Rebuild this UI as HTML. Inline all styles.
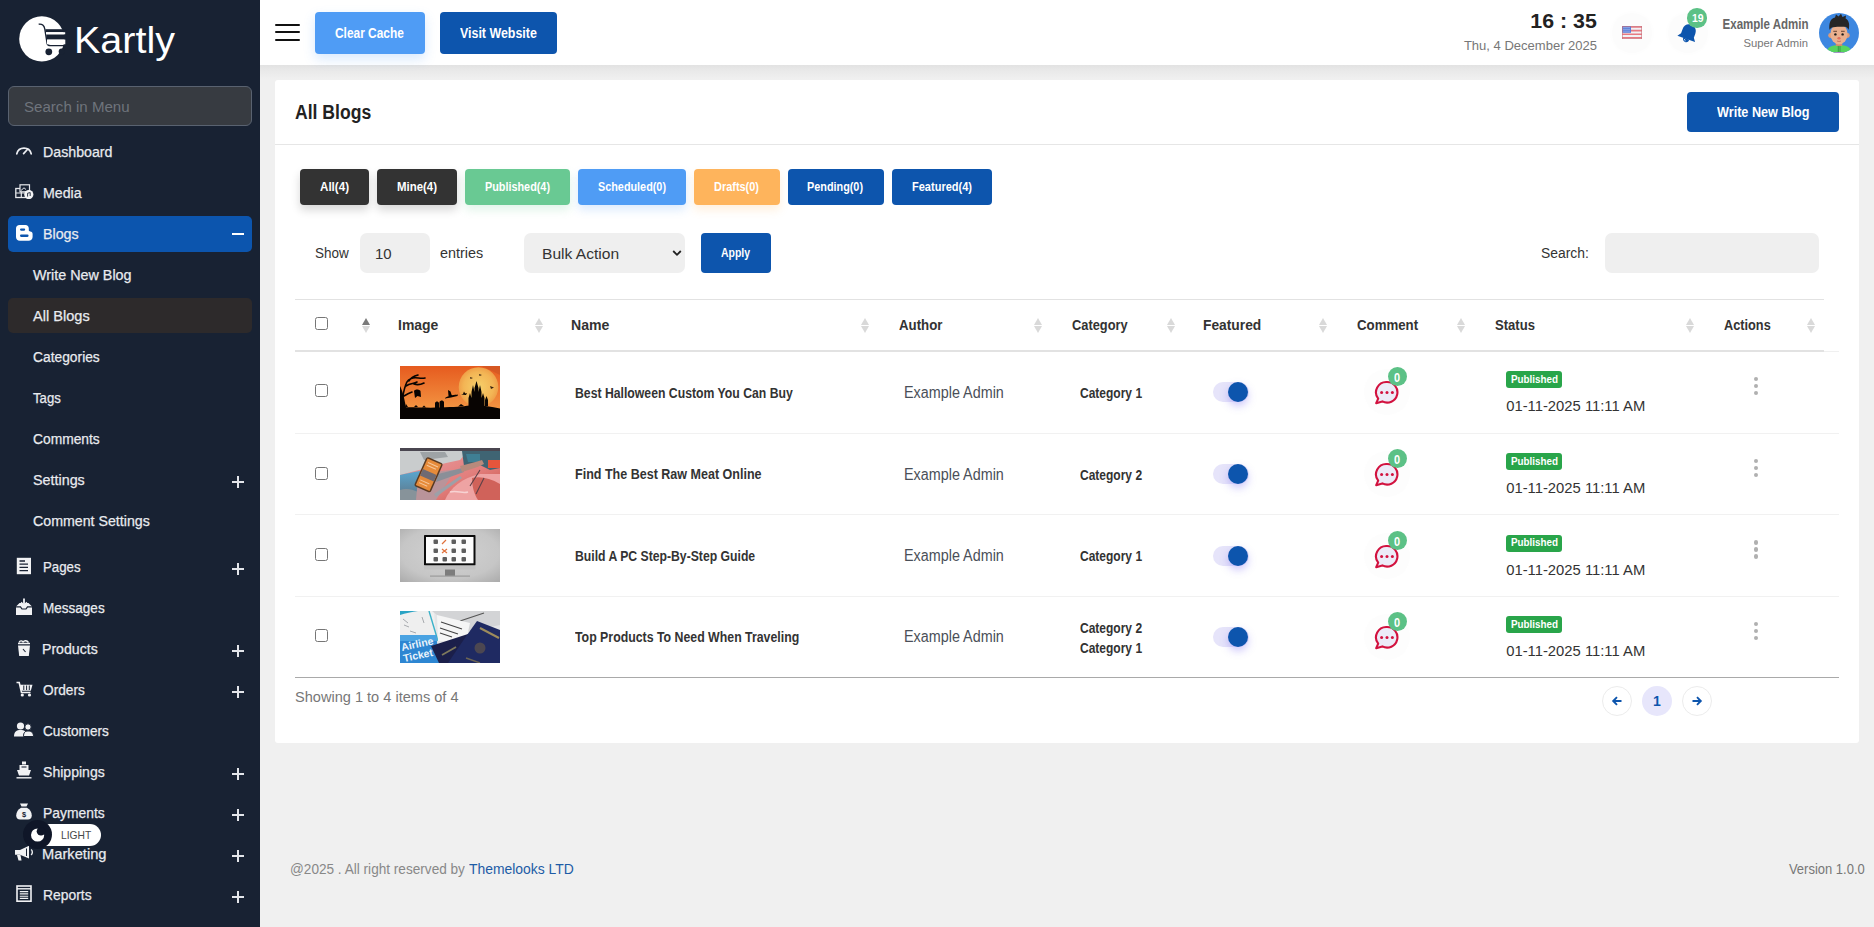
<!DOCTYPE html>
<html><head><meta charset="utf-8"><title>All Blogs</title>
<style>
*{box-sizing:border-box;margin:0;padding:0}
html,body{width:1874px;height:927px;overflow:hidden;background:#f0f0f0;font-family:"Liberation Sans",sans-serif;position:relative}
.a{position:absolute}
.tx{position:absolute;white-space:nowrap;line-height:1;z-index:3}
#sb{position:absolute;left:0;top:0;width:260px;height:927px;background:#182233}
.pl{position:absolute;width:12px;height:12px}
.pl:before{content:"";position:absolute;left:0;top:5px;width:12px;height:2px;background:#e3e5ea}
.pl:after{content:"";position:absolute;left:5px;top:0;width:2px;height:12px;background:#e3e5ea}
.btn{position:absolute;border-radius:4px}
.cb{position:absolute;width:13px;height:13px;border:1px solid #767676;border-radius:2.5px;background:#fff}
.sort{position:absolute;width:8px;height:16px}
.sort:before{content:"";position:absolute;left:0;top:0;border-left:4px solid transparent;border-right:4px solid transparent;border-bottom:7px solid #d9d9d9}
.sort:after{content:"";position:absolute;left:0;top:8px;border-left:4px solid transparent;border-right:4px solid transparent;border-top:7px solid #d9d9d9}
.sort.up:before{border-bottom-color:#7a7a7a}
.tog{position:absolute;width:36px;height:20px;border-radius:10px;background:#e6e4fa}
.knob{position:absolute;width:20px;height:20px;border-radius:50%;background:#0d55ad;box-shadow:0 4px 8px rgba(110,90,240,.35)}
.pub{position:absolute;width:56px;height:17px;border-radius:3px;background:#29a54a}
.dot{position:absolute;width:4.6px;height:4.6px;border-radius:50%;background:#b0b0b0}
.badge{position:absolute;width:19px;height:19px;border-radius:50%;background:#5cc186}
.pg{position:absolute;width:30px;height:30px;border-radius:50%;border:1px solid #ececec;background:#fff}

</style></head><body>
<div id="sb">
  <svg class="a" style="left:15px;top:12px" width="55" height="55" viewBox="15 12 55 55">
    <circle cx="41.8" cy="38.9" r="22.6" fill="#fff"/>
    <path d="M38.7 24.2 C42 23.6 44.2 25.5 44.8 29 L47.2 43.8 C47.6 45.3 48.6 45.6 50.5 45.6 L66 45.6" fill="none" stroke="#182233" stroke-width="1.4"/>
    <rect x="45.4" y="29.2" width="21" height="3" fill="#182233"/>
    <rect x="46.3" y="34.3" width="20" height="5.3" fill="#182233"/>
    <rect x="63" y="24" width="6" height="5.2" fill="#182233"/>
    <rect x="64.6" y="32.2" width="5" height="2.1" fill="#182233"/>
    <rect x="64.8" y="39.6" width="5" height="4.7" fill="#182233"/>
    <rect x="46" y="32.2" width="19.2" height="2.1" fill="#fff"/>
    <rect x="47" y="39.6" width="18.3" height="4.7" fill="#fff"/>
    <circle cx="48.8" cy="51.8" r="3.4" fill="#182233"/>
    <circle cx="61.6" cy="51.5" r="2.9" fill="#182233"/>
  </svg>
  <div class="a" style="left:8px;top:86px;width:244px;height:40px;border:1px solid #596270;border-radius:6px;background:#373b41"></div>

  <!-- icons -->
  <svg class="a" style="left:15px;top:142.5px" width="18" height="12" viewBox="0 0 18 12">
    <path d="M1.8 10.8 A7.4 7.4 0 0 1 16.2 10.8" fill="none" stroke="#eceef2" stroke-width="1.7" stroke-linecap="round"/>
    <path d="M8.6 10.6 L12.6 6.2" stroke="#eceef2" stroke-width="1.7" stroke-linecap="round"/>
  </svg>
  <svg class="a" style="left:15px;top:184px" width="19" height="15" viewBox="0 0 19 15">
    <rect x="0.8" y="4.5" width="11" height="9" fill="none" stroke="#e6e8ec" stroke-width="1.3"/>
    <path d="M0.8 9 H11.8 M6.3 4.5 V13.5" stroke="#e6e8ec" stroke-width="1.2"/>
    <rect x="5" y="0.8" width="9.5" height="7" fill="#182233" stroke="#e6e8ec" stroke-width="1.2"/>
    <path d="M6 6.5 L9 3.8 L11 5.5" stroke="#e6e8ec" stroke-width="1" fill="none"/>
    <circle cx="13.8" cy="10.6" r="4.6" fill="#f2f3f5"/>
    <path d="M12.6 12.6 V9.2 L15.2 8.6 V12" stroke="#182233" stroke-width="0.9" fill="none"/>
  </svg>
  <div class="a" style="left:8px;top:216px;width:244px;height:36px;background:#0c55ae;border-radius:5px"></div>
  <svg class="a" style="left:16px;top:225px" width="17" height="16" viewBox="0 0 17 16">
    <path d="M3.5 0 H9.5 C11.5 0 12.8 1.5 12.8 3.5 V5 C12.8 6 13.4 6.4 14.2 6.4 C15.8 6.4 16.6 7.4 16.6 9 V12 C16.6 14.4 14.8 15.8 12.6 15.8 H3.8 C1.6 15.8 0 14.2 0 12 V3.5 C0 1.4 1.4 0 3.5 0 Z" fill="#fff"/>
    <rect x="4" y="3.4" width="5.2" height="2.3" rx="1.1" fill="#0c55ae"/>
    <rect x="4" y="9.6" width="8.6" height="2.3" rx="1.1" fill="#0c55ae"/>
  </svg>
  <div class="a" style="left:231.5px;top:232.5px;width:12px;height:2px;background:#fff"></div>
  <div class="a" style="left:8px;top:298px;width:244px;height:35px;background:#2d2a2b;border-radius:5px"></div>

  <div class="pl" style="left:232px;top:476px"></div>
  <div class="pl" style="left:232px;top:563px"></div>
  <div class="pl" style="left:232px;top:645px"></div>
  <div class="pl" style="left:232px;top:686px"></div>
  <div class="pl" style="left:232px;top:768px"></div>
  <div class="pl" style="left:232px;top:809px"></div>
  <div class="pl" style="left:232px;top:850px"></div>
  <div class="pl" style="left:232px;top:891px"></div>

  <!-- pages -->
  <svg class="a" style="left:16px;top:557px" width="16" height="18" viewBox="0 0 16 18">
    <rect x="0.8" y="0.8" width="14.2" height="16.4" fill="#f1f2f4"/>
    <path d="M3.5 4 H9 M3.5 7.2 H12 M3.5 10.4 H12 M3.5 13.6 H12" stroke="#182233" stroke-width="1.3"/>
  </svg>
  <!-- messages -->
  <svg class="a" style="left:16px;top:598px" width="16" height="18" viewBox="0 0 16 18">
    <path d="M0 8.5 L3.5 5 H5.5 L8 8 L10.5 5 H12.5 L16 8.5 V17 H0 Z" fill="#f1f2f4"/>
    <path d="M0 8.8 H4.5 L6 11 H10 L11.5 8.8 H16" stroke="#182233" stroke-width="1.2" fill="none"/>
    <path d="M8 0.5 V7" stroke="#f1f2f4" stroke-width="1.8"/>
    <path d="M5 4.5 L8 7.6 L11 4.5" stroke="#f1f2f4" stroke-width="1.8" fill="none"/>
  </svg>
  <!-- products -->
  <svg class="a" style="left:17px;top:640px" width="14" height="17" viewBox="0 0 14 17">
    <path d="M1 5.5 H13 L11.8 16 H2.2 Z" fill="#f1f2f4"/>
    <path d="M1 3.5 H13" stroke="#f1f2f4" stroke-width="1.5"/>
    <path d="M2 2.5 C3 0.5 5 0.5 6 2 C7.5 0 10 0.5 11.5 2.5" stroke="#f1f2f4" stroke-width="1.3" fill="none"/>
    <path d="M6 9 L8.5 12" stroke="#182233" stroke-width="1.1"/>
  </svg>
  <!-- orders -->
  <svg class="a" style="left:16px;top:681px" width="17" height="16" viewBox="0 0 17 16">
    <path d="M0.5 1.5 H3.2 L5.5 11.5 H14.5" stroke="#f1f2f4" stroke-width="1.6" fill="none"/>
    <path d="M4 3.8 H16.5 L14.8 9.8 H5.3 Z" fill="#f1f2f4"/>
    <path d="M7.8 4.5 V9 M10.6 4.5 V9 M13.3 4.5 V9" stroke="#182233" stroke-width="1"/>
    <circle cx="6.3" cy="14" r="1.6" fill="#f1f2f4"/><circle cx="13.5" cy="14" r="1.6" fill="#f1f2f4"/>
  </svg>
  <!-- customers -->
  <svg class="a" style="left:14px;top:722px" width="20" height="15" viewBox="0 0 20 15">
    <circle cx="6.5" cy="4" r="3.6" fill="#f1f2f4"/>
    <path d="M0 14.5 C0 9.5 2.5 8 6.5 8 C10.5 8 13 9.5 13 14.5 Z" fill="#f1f2f4"/>
    <circle cx="14" cy="5" r="3.2" fill="#f1f2f4" stroke="#182233" stroke-width="1"/>
    <path d="M9.5 14.5 C9.5 10.5 11 9 14 9 C17.5 9 19.5 10.5 19.5 14.5 Z" fill="#f1f2f4" stroke="#182233" stroke-width="1"/>
  </svg>
  <!-- shippings -->
  <svg class="a" style="left:16px;top:761px" width="16" height="18" viewBox="0 0 16 18">
    <rect x="6" y="0.5" width="4" height="3" fill="#f1f2f4"/>
    <path d="M3.5 4 H12.5 V9 H3.5 Z" fill="#f1f2f4"/>
    <path d="M1 9 H15 L13 14.5 H3 Z" fill="#f1f2f4"/>
    <path d="M5.5 6 H10.5" stroke="#182233" stroke-width="1.1"/>
    <path d="M0.5 16.8 H15.5" stroke="#f1f2f4" stroke-width="1.4"/>
  </svg>
  <!-- payments -->
  <svg class="a" style="left:16px;top:803px" width="16" height="17" viewBox="0 0 16 17">
    <path d="M4 0.5 H12 L10.5 3.5 H5.5 Z" fill="#f1f2f4"/>
    <path d="M5 4.8 H11 C14 6.5 15.8 9.5 15.8 12.5 C15.8 15 14.2 16.5 12 16.5 H4 C1.8 16.5 0.2 15 0.2 12.5 C0.2 9.5 2 6.5 5 4.8 Z" fill="#f1f2f4"/>
    <text x="8" y="14" font-family="Liberation Sans" font-size="7.5" font-weight="bold" text-anchor="middle" fill="#182233">$</text>
  </svg>
  <!-- marketing -->
  <svg class="a" style="left:14px;top:845px" width="20" height="16" viewBox="0 0 20 16">
    <path d="M1 5 H6 L15 0.8 V13.5 L6 9.8 H1 Z" fill="#f1f2f4"/>
    <path d="M3 10 L4.5 15.5 H7.5 L6.5 10" fill="#f1f2f4"/>
    <path d="M12.5 3.5 V11" stroke="#182233" stroke-width="1"/>
    <path d="M17 4.5 C18.8 5.5 18.8 8.8 17 9.8" stroke="#f1f2f4" stroke-width="1.4" fill="none"/>
  </svg>
  <!-- reports -->
  <svg class="a" style="left:16px;top:885px" width="16" height="17" viewBox="0 0 16 17">
    <rect x="1" y="1" width="14" height="15.2" fill="none" stroke="#f1f2f4" stroke-width="1.6"/>
    <path d="M1 3.8 H15" stroke="#f1f2f4" stroke-width="1.4"/>
    <path d="M3.8 6.6 H12.2 M3.8 8.9 H12.2 M3.8 11.2 H12.2 M3.8 13.4 H12.2" stroke="#f1f2f4" stroke-width="1.1"/>
  </svg>

  <!-- light toggle -->
  <div class="a" style="left:24px;top:824px;width:77px;height:22px;border-radius:11px;background:#fff;z-index:5"></div>
  <div class="a" style="left:23px;top:820px;width:29px;height:29px;border-radius:50%;background:#0f1628;z-index:5"></div>
  <svg class="a" style="left:29px;top:826px;z-index:6" width="17" height="17" viewBox="0 0 17 17">
    <circle cx="8.6" cy="9" r="6.6" fill="#fff"/>
    <circle cx="12" cy="5.3" r="4.3" fill="#0f1628"/>
  </svg>
</div>

<!-- header -->
<div class="a" style="left:260px;top:65px;width:1614px;height:14px;background:linear-gradient(#e2e2e2,#e9e9e9 40%,#f0f0f0)"></div>
<div class="a" style="left:260px;top:0;width:1614px;height:65px;background:#fff"></div>
<div class="a" style="left:275px;top:23.5px;width:25px;height:2px;background:#111;border-radius:1px"></div>
<div class="a" style="left:275px;top:31.3px;width:25px;height:2px;background:#111;border-radius:1px"></div>
<div class="a" style="left:275px;top:39.2px;width:25px;height:2px;background:#111;border-radius:1px"></div>
<div class="btn" style="left:315px;top:12px;width:110px;height:42px;background:#4f9cf5;box-shadow:0 5px 12px rgba(79,156,245,.22)"></div>
<div class="btn" style="left:440px;top:12px;width:117px;height:42px;background:#0d55ad"></div>
<div class="a" style="left:1612px;top:13px;width:40px;height:40px;border-radius:50%;background:#fcfcfc;box-shadow:0 0 6px rgba(0,0,0,.015)"></div>
<svg class="a" style="left:1622px;top:26px" width="20" height="13" viewBox="0 0 20 13">
  <rect x="0" y="0" width="20" height="13" fill="#f1f1f4"/>
  <path d="M0 1 H20 M0 4.6 H20 M0 8.2 H20 M0 11.8 H20" stroke="#e77a82" stroke-width="1.6"/>
  <rect x="0" y="0" width="9" height="6.8" fill="#5b7ed8"/>
  <path d="M1.5 1.6 H8 M1.5 3.4 H8 M1.5 5.2 H8" stroke="#dfe6fb" stroke-width="0.7" stroke-dasharray="1 1"/>
  <rect x="0.3" y="0.3" width="19.4" height="12.4" fill="none" stroke="#c9707a" stroke-width="0.6"/>
</svg>
<div class="a" style="left:1668px;top:13px;width:40px;height:40px;border-radius:50%;background:#fcfcfc;box-shadow:0 0 6px rgba(0,0,0,.015)"></div>
<svg class="a" style="left:1674px;top:20px" width="28" height="27" viewBox="0 0 28 27">
  <g transform="rotate(20 14 14)">
    <path d="M14 4.2 C9.8 4.2 7.2 7.3 7.2 11.3 V15.6 L4.6 19.2 H23.4 L20.8 15.6 V11.3 C20.8 7.3 18.2 4.2 14 4.2 Z" fill="#0d55ad"/>
    <path d="M10.8 19 C10.8 21.4 12.2 22.6 14 22.6 C15.8 22.6 17.2 21.4 17.2 19 Z" fill="#0d55ad"/>
    <path d="M12.4 20 C12.8 21 13.4 21.3 14 21.3" stroke="#dfe9f7" stroke-width=".8" fill="none"/>
  </g>
</svg>
<div class="badge" style="left:1687.2px;top:8.2px;width:19.5px;height:19.5px"></div>
<svg class="a" style="left:1819px;top:13px" width="40" height="40" viewBox="0 0 40 40">
  <defs><clipPath id="av"><circle cx="20" cy="20" r="20"/></clipPath></defs>
  <g clip-path="url(#av)">
    <rect width="40" height="40" fill="#3d87e0"/>
    <path d="M7 41 C8 34 12 32 20 32 C28 32 32 34 33 41 Z" fill="#56d45e"/>
    <path d="M10 39 H30 V41 H10 Z" fill="#b48ad8"/>
    <path d="M19.3 32 V39 M21 32 V39" stroke="#2f7d3c" stroke-width="0.7"/>
    <rect x="16.8" y="28" width="6.4" height="5" fill="#cf8d6c"/>
    <circle cx="11.6" cy="22.5" r="2.4" fill="#df9c78"/><circle cx="28.4" cy="22.5" r="2.4" fill="#df9c78"/>
    <ellipse cx="20" cy="21" rx="8.6" ry="10.4" fill="#eab08e"/>
    <path d="M10.5 17 C9.5 10 12 5 16 4.5 L17 1.5 L19.5 3.5 L22 0.8 L23.5 4 L27 2.5 L26.6 5.5 C30 7 31 12 29.5 17 C28.5 14.5 27.5 13.8 24 13.8 C20 13.5 15 13.8 13 14.5 C11.5 15.3 11 16 10.5 17 Z" fill="#262626"/>
    <path d="M14.3 18.3 H18 M22 18.3 H25.7" stroke="#5b3a2a" stroke-width="0.9"/>
    <circle cx="16.4" cy="21.4" r="1.2" fill="#1d1d1d"/><circle cx="23.6" cy="21.4" r="1.2" fill="#1d1d1d"/>
    <ellipse cx="20" cy="25.2" rx="1.6" ry="1.2" fill="#e0705c"/>
    <path d="M18 28 C19 28.6 21 28.6 22 28" stroke="#b4604d" stroke-width="0.7" fill="none"/>
  </g>
</svg>

<!-- card -->
<div class="a" style="left:275px;top:80px;width:1584px;height:663px;background:#fff;border-radius:3px"></div>
<div class="a" style="left:275px;top:144px;width:1584px;height:1px;background:#e6e6e6"></div>
<div class="btn" style="left:1687px;top:92px;width:152px;height:40px;background:#0d55ad"></div>

<div class="btn" style="left:300px;top:169px;width:69px;height:36px;background:#333;box-shadow:0 5px 10px rgba(0,0,0,.16)"></div>
<div class="btn" style="left:377px;top:169px;width:80px;height:36px;background:#333;box-shadow:0 5px 10px rgba(0,0,0,.16)"></div>
<div class="btn" style="left:465px;top:169px;width:105px;height:36px;background:#69c993;box-shadow:0 5px 10px rgba(105,201,147,.2)"></div>
<div class="btn" style="left:578px;top:169px;width:108px;height:36px;background:#4f9cf5;box-shadow:0 5px 10px rgba(79,156,245,.2)"></div>
<div class="btn" style="left:694px;top:169px;width:86px;height:36px;background:#feb45c;box-shadow:0 5px 10px rgba(254,180,92,.2)"></div>
<div class="btn" style="left:788px;top:169px;width:96px;height:36px;background:#0d55ad"></div>
<div class="btn" style="left:892px;top:169px;width:100px;height:36px;background:#0d55ad"></div>

<div class="a" style="left:360px;top:233px;width:70px;height:40px;background:#efefef;border-radius:7px"></div>
<div class="a" style="left:524px;top:233px;width:161px;height:40px;background:#efefef;border-radius:7px"></div>
<svg class="a" style="left:672px;top:249px" width="10" height="8" viewBox="0 0 10 8"><path d="M1.2 2 L5 5.8 L8.8 2" fill="none" stroke="#222" stroke-width="1.8"/></svg>
<div class="btn" style="left:701px;top:233px;width:70px;height:40px;background:#0d55ad"></div>
<div class="a" style="left:1605px;top:233px;width:214px;height:40px;background:#efefef;border-radius:7px"></div>

<!-- table -->
<div class="a" style="left:295px;top:299px;width:1529px;height:1px;background:#e2e2e2"></div>
<div class="a" style="left:295px;top:350px;width:1529px;height:2px;background:#e2e2e2"></div>
<div class="a" style="left:1824px;top:351px;width:15px;height:1px;background:#f0f0f0"></div>
<div class="a" style="left:295px;top:433px;width:1544px;height:1px;background:#f1f1f1"></div>
<div class="a" style="left:295px;top:514px;width:1544px;height:1px;background:#f1f1f1"></div>
<div class="a" style="left:295px;top:596px;width:1544px;height:1px;background:#f1f1f1"></div>
<div class="a" style="left:295px;top:677px;width:1544px;height:1px;background:#a9a9a9"></div>

<div class="cb" style="left:315px;top:317px"></div>
<div class="sort up" style="left:362px;top:318px"></div>
<div class="sort" style="left:535px;top:318px"></div>
<div class="sort" style="left:860.5px;top:318px"></div>
<div class="sort" style="left:1034.3px;top:318px"></div>
<div class="sort" style="left:1166.6px;top:318px"></div>
<div class="sort" style="left:1319.2px;top:318px"></div>
<div class="sort" style="left:1457px;top:318px"></div>
<div class="sort" style="left:1686px;top:318px"></div>
<div class="sort" style="left:1807px;top:318px"></div>
<div class="cb" style="left:315px;top:384px"></div>
<div class="a" style="left:400px;top:366px;width:100px;height:53px;overflow:hidden"><svg width="100" height="53" viewBox="0 0 100 53">
<defs><linearGradient id="hg" x1="0" y1="0" x2="0" y2="1"><stop offset="0" stop-color="#e65b1f"/><stop offset=".75" stop-color="#f2903f"/><stop offset="1" stop-color="#f4a24f"/></linearGradient>
<radialGradient id="mg" cx=".5" cy=".5" r=".5"><stop offset="0" stop-color="#f6d06a"/><stop offset=".75" stop-color="#f3b555"/><stop offset="1" stop-color="#efa048"/></radialGradient></defs>
<rect width="100" height="53" fill="url(#hg)"/>
<circle cx="78.5" cy="21" r="19.8" fill="url(#mg)"/>
<path d="M82 0 C88 3 94 6 100 9 V0 Z" fill="#c95424" opacity=".55"/>
<path d="M0 41.5 C12 41 25 42 40 41.5 C55 41 62 40.5 70 39.5 C80 38.8 90 40.5 100 42.5 V53 H0 Z" fill="#080402"/>
<path d="M1 42 C2 34 3 26 6 18 C7 15 9 13 13 12 C17 11 20 13 25 12 M6 20 C10 17 14 18 17 16 M9 15 C11 11 14 10 18 9 M14 18 C17 19 20 19 24 17 M4 30 C7 28 9 27 12 26" stroke="#080402" stroke-width="1.6" fill="none" stroke-linecap="round"/>
<path d="M0 42 V20 C2 24 4 30 6 42 Z" fill="#080402"/>
<path d="M14 25 C15 23 19 23 20.5 25 L21 31 L17.5 30 L15 32 Z" fill="#080402"/>
<path d="M35 42 V37 C36 35 38 35 39 37 V42 Z M39.5 42 V36 C40.5 34 43 34 44 36 V42 Z" fill="#080402"/>
<path d="M45 32 C49 29 55 29 58 28.5 L57.5 30 C53 31 49 32 45 32.5 Z M48 24 L50.5 25.5 L52 30 L48.5 30 Z" fill="#080402"/>
<path d="M61 28.5 L67 27 L66 29 Z M64 25.5 L65.5 28 L63 28 Z" fill="#080402"/>
<path d="M68.5 40 V32 L70 27 L71.5 32 V26 L73 19 L74.5 26 V22 L76.5 15 L78.5 22 V26 L80 19 L81.5 26 V32 L83 27 L84.5 32 V40 Z" fill="#080402"/>
<path d="M85 40 V34 L86.5 30 L88 34 V40 Z" fill="#080402"/>
<path d="M90 20 L94 21.5 L91 23 Z M70 11 L73 12 L70.5 13 Z M79 8 L82 9 L79.5 10 Z" fill="#3a2410"/>
<path d="M5 41 L6 38 L8 41 M14 41 L16 39 L18 41 M22 41.5 L24 39.5 L26 41.5 M58 40.5 L61 38 L64 40" fill="#080402"/>
</svg></div>
<div class="tog" style="left:1213px;top:382px"></div>
<div class="knob" style="left:1228px;top:382px"></div>
<div class="a" style="left:1364px;top:369px;width:46px;height:46px;border-radius:50%;background:#fdfdfd"></div>
<svg class="a" style="left:1373px;top:380px" width="28" height="26" viewBox="0 0 28 26">
<path d="M14 2 A10.3 10.3 0 1 1 9.3 21.4 L3.2 23.2 L5.2 18.6 A10.3 10.3 0 0 1 14 2 Z" fill="#ecebf8" stroke="#d2123f" stroke-width="2.1" stroke-linejoin="round"/>
<circle cx="8.6" cy="12.6" r="1.5" fill="#d2123f"/><circle cx="14" cy="12.6" r="1.5" fill="#d2123f"/><circle cx="19.4" cy="12.6" r="1.5" fill="#d2123f"/>
</svg>
<div class="badge" style="left:1387.5px;top:367px"></div>
<div class="pub" style="left:1506px;top:371px"></div>
<div class="dot" style="left:1753.5px;top:376.5px"></div>
<div class="dot" style="left:1753.5px;top:383.5px"></div>
<div class="dot" style="left:1753.5px;top:390.5px"></div>
<div class="cb" style="left:315px;top:466.5px"></div>
<div class="a" style="left:400px;top:448px;width:100px;height:53px;overflow:hidden"><svg width="100" height="52" viewBox="0 0 100 52">
<defs>
<linearGradient id="mt" x1="0" y1="0" x2="1" y2="1"><stop offset="0" stop-color="#e9a3a8"/><stop offset=".6" stop-color="#e27f7d"/><stop offset="1" stop-color="#c95247"/></linearGradient>
<linearGradient id="bl" x1="0" y1="0" x2="0" y2="1"><stop offset="0" stop-color="#5aa6cf"/><stop offset="1" stop-color="#5e7383"/></linearGradient>
</defs>
<rect width="100" height="52" fill="url(#mt)"/>
<rect width="100" height="3" fill="#4a4650"/>
<path d="M0 3 H68 L60 12 C40 16 20 22 0 27 Z" fill="#c9cccd"/>
<path d="M20 4 L45 4 L48 9 L24 12 Z" fill="#9ea3a6"/>
<path d="M62 3 H100 V20 L90 22 L78 16 L64 18 Z" fill="#3f6473"/>
<path d="M88 12 H100 V20 H88 Z" fill="#e5553c"/>
<path d="M66 6 H80 V14 H68 Z" fill="#3f7f94"/>
<path d="M0 27 C8 25 14 24 20 23 L18 52 H0 Z" fill="url(#bl)"/>
<path d="M0 42 C6 40 12 41 18 44 L19 52 H0 Z" fill="#87939a"/>
<path d="M18 30 C30 24 45 22 55 22 L36 52 H16 Z" fill="#b9949a"/>
<path d="M38 26 L62 20 L64 24 L36 34 Z" fill="#8a8f98"/>
<path d="M34 46 L60 28 L62 30 L36 49 Z" fill="#9ca0a8"/>
<path d="M60 18 C68 16 76 14 82 12 L84 16 C76 20 68 22 62 24 Z" fill="#b88a7c"/>
<path d="M45 52 C50 40 62 30 80 26 L100 26 V52 Z" fill="#eea3a3"/>
<path d="M72 30 C80 28 90 30 100 36 V52 H78 C74 46 72 38 72 30 Z" fill="#d0625a"/>
<path d="M70 38 L80 22 M76 46 L84 30" stroke="#5b4048" stroke-width="1.1"/>
<path d="M50 44 C58 42 62 46 68 44" stroke="#f7d3d3" stroke-width="1.5" fill="none"/>
<g transform="rotate(24 29 27)"><rect x="19.5" y="11" width="18" height="32" rx="2.5" fill="#5a3a22"/><rect x="21" y="12.5" width="15" height="29" fill="#e68b3a"/><rect x="21" y="24" width="15" height="7" fill="#6f6a72"/><path d="M23 16 H34 M23 19 H33 M23 35 H33 M23 38 H32" stroke="#f6c79a" stroke-width="1"/></g>
</svg></div>
<div class="tog" style="left:1213px;top:464px"></div>
<div class="knob" style="left:1228px;top:464px"></div>
<div class="a" style="left:1364px;top:451px;width:46px;height:46px;border-radius:50%;background:#fdfdfd"></div>
<svg class="a" style="left:1373px;top:462px" width="28" height="26" viewBox="0 0 28 26">
<path d="M14 2 A10.3 10.3 0 1 1 9.3 21.4 L3.2 23.2 L5.2 18.6 A10.3 10.3 0 0 1 14 2 Z" fill="#ecebf8" stroke="#d2123f" stroke-width="2.1" stroke-linejoin="round"/>
<circle cx="8.6" cy="12.6" r="1.5" fill="#d2123f"/><circle cx="14" cy="12.6" r="1.5" fill="#d2123f"/><circle cx="19.4" cy="12.6" r="1.5" fill="#d2123f"/>
</svg>
<div class="badge" style="left:1387.5px;top:449px"></div>
<div class="pub" style="left:1506px;top:453px"></div>
<div class="dot" style="left:1753.5px;top:458.5px"></div>
<div class="dot" style="left:1753.5px;top:465.5px"></div>
<div class="dot" style="left:1753.5px;top:472.5px"></div>
<div class="cb" style="left:315px;top:548px"></div>
<div class="a" style="left:400px;top:529px;width:100px;height:53px;overflow:hidden"><svg width="100" height="53" viewBox="0 0 100 53">
<defs><radialGradient id="pg" cx=".5" cy=".45" r=".75"><stop offset="0" stop-color="#d2d2d2"/><stop offset=".65" stop-color="#c6c6c6"/><stop offset="1" stop-color="#aaaaaa"/></radialGradient></defs>
<rect width="100" height="53" fill="url(#pg)"/>
<rect x="24" y="6" width="51.5" height="30.5" rx="0.8" fill="#0c0c0c"/>
<rect x="26" y="8" width="47.5" height="26.3" fill="#fdfdfd"/>
<g fill="#5e5e5e">
<rect x="33.5" y="10.5" width="4.5" height="4.5" rx="1"/><rect x="51.5" y="10.5" width="4.5" height="4.5" rx="1"/><rect x="61.5" y="10.5" width="4.5" height="4.5" rx="1"/>
<rect x="33.5" y="19.5" width="4.5" height="4.5" rx="1"/><rect x="51.5" y="19.5" width="4.5" height="4.5" rx="1"/><rect x="61.5" y="19.5" width="4.5" height="4.5" rx="1"/>
<rect x="33.5" y="28" width="4.5" height="4.5" rx="1"/><rect x="42.5" y="28" width="4.5" height="4.5" rx="1"/><rect x="51.5" y="28" width="4.5" height="4.5" rx="1"/><rect x="61.5" y="28" width="4.5" height="4.5" rx="1"/>
</g>
<path d="M42 15 L46 11 M42 20 L47 24 M47 20 L42 24" stroke="#e0703a" stroke-width="1.2"/>
<rect x="24" y="36.5" width="51.5" height="4" fill="#c2c2c2"/>
<rect x="45" y="40.5" width="10" height="6.5" fill="#7d7d7d"/>
<rect x="30" y="46.5" width="40" height="1.2" fill="#9c9c9c"/>
</svg></div>
<div class="tog" style="left:1213px;top:545.5px"></div>
<div class="knob" style="left:1228px;top:545.5px"></div>
<div class="a" style="left:1364px;top:532.5px;width:46px;height:46px;border-radius:50%;background:#fdfdfd"></div>
<svg class="a" style="left:1373px;top:543.5px" width="28" height="26" viewBox="0 0 28 26">
<path d="M14 2 A10.3 10.3 0 1 1 9.3 21.4 L3.2 23.2 L5.2 18.6 A10.3 10.3 0 0 1 14 2 Z" fill="#ecebf8" stroke="#d2123f" stroke-width="2.1" stroke-linejoin="round"/>
<circle cx="8.6" cy="12.6" r="1.5" fill="#d2123f"/><circle cx="14" cy="12.6" r="1.5" fill="#d2123f"/><circle cx="19.4" cy="12.6" r="1.5" fill="#d2123f"/>
</svg>
<div class="badge" style="left:1387.5px;top:530.5px"></div>
<div class="pub" style="left:1506px;top:534.5px"></div>
<div class="dot" style="left:1753.5px;top:540.0px"></div>
<div class="dot" style="left:1753.5px;top:547.0px"></div>
<div class="dot" style="left:1753.5px;top:554.0px"></div>
<div class="cb" style="left:315px;top:629px"></div>
<div class="a" style="left:400px;top:611px;width:100px;height:53px;overflow:hidden"><svg width="100" height="52" viewBox="0 0 100 52">
<rect width="100" height="52" fill="#e4e5e7"/>
<path d="M0 0 H34 L36 24 H0 Z" fill="#efefef"/>
<path d="M0 0 H18 C12 1 5 2 0 4 Z" fill="#2aa3c4"/>
<path d="M3 8 L8 12 M4 14 L9 16 M10 20 L16 22 M22 6 L24 12" stroke="#a7aaae" stroke-width="1"/>
<path d="M29 0 L38 30" stroke="#3bb2c9" stroke-width="1.4"/>
<path d="M32 0 H100 V14 L60 22 Z" fill="#d3d4d6"/>
<path d="M60 10 L84 2" stroke="#555" stroke-width="1.3"/>
<path d="M37 4 L70 12 L66 30 L38 30 Z" fill="#f5f5f5"/>
<path d="M41 11 L62 18 M40 17 L58 23 M40 22 L52 26" stroke="#444" stroke-width="1.1"/>
<path d="M0 24 H36 L40 52 H0 Z" fill="#2d86d2"/>
<path d="M0 24 H36 L37 30 H0 Z" fill="#4aa3e2"/>
<text x="2" y="40" font-family="Liberation Sans" font-weight="bold" font-size="10.5" fill="#e9f3fb" transform="rotate(-12 2 40)">Airline</text>
<text x="4" y="51" font-family="Liberation Sans" font-weight="bold" font-size="10.5" fill="#e9f3fb" transform="rotate(-12 4 51)">Ticket</text>
<path d="M31 35 L68 23 L78 52 H39 Z" fill="#1b1f4a"/>
<path d="M48 52 C56 40 64 28 77 10 L100 19 V52 Z" fill="#1f2a62"/>
<path d="M80 17 L99 27" stroke="#9d8c5c" stroke-width="2"/>
<circle cx="80" cy="37" r="5.5" fill="#584f4e" opacity=".8"/>
<path d="M42 44 L56 36" stroke="#7f7a5c" stroke-width="1.8"/>
<path d="M66 47 L80 52" stroke="#6d6654" stroke-width="1.4"/>
</svg></div>
<div class="tog" style="left:1213px;top:627px"></div>
<div class="knob" style="left:1228px;top:627px"></div>
<div class="a" style="left:1364px;top:614px;width:46px;height:46px;border-radius:50%;background:#fdfdfd"></div>
<svg class="a" style="left:1373px;top:625px" width="28" height="26" viewBox="0 0 28 26">
<path d="M14 2 A10.3 10.3 0 1 1 9.3 21.4 L3.2 23.2 L5.2 18.6 A10.3 10.3 0 0 1 14 2 Z" fill="#ecebf8" stroke="#d2123f" stroke-width="2.1" stroke-linejoin="round"/>
<circle cx="8.6" cy="12.6" r="1.5" fill="#d2123f"/><circle cx="14" cy="12.6" r="1.5" fill="#d2123f"/><circle cx="19.4" cy="12.6" r="1.5" fill="#d2123f"/>
</svg>
<div class="badge" style="left:1387.5px;top:612px"></div>
<div class="pub" style="left:1506px;top:616px"></div>
<div class="dot" style="left:1753.5px;top:621.5px"></div>
<div class="dot" style="left:1753.5px;top:628.5px"></div>
<div class="dot" style="left:1753.5px;top:635.5px"></div>
<div class="pg" style="left:1602px;top:686px"></div>
<div class="a" style="left:1642px;top:686px;width:30px;height:30px;border-radius:50%;background:#e7e6fb"></div>
<div class="pg" style="left:1682px;top:686px"></div>
<svg class="a" style="left:1611px;top:695px" width="12" height="12" viewBox="0 0 12 12"><path d="M10.5 6 H2.5 M6 2.2 L2.2 6 L6 9.8" fill="none" stroke="#0d55ad" stroke-width="1.9"/></svg>
<svg class="a" style="left:1691px;top:695px" width="12" height="12" viewBox="0 0 12 12"><path d="M1.5 6 H9.5 M6 2.2 L9.8 6 L6 9.8" fill="none" stroke="#0d55ad" stroke-width="1.9"/></svg>
<span class="tx" style="top:22px;font-size:37.5px;color:#fff;left:73.64px;transform:scaleX(1.0526);transform-origin:0 0;">Kartly</span>
<span class="tx" style="top:99px;font-size:15.5px;color:#6f747c;left:24.40px;transform:scaleX(0.9728);transform-origin:0 0;">Search in Menu</span>
<span class="tx" style="top:144px;font-size:15.5px;color:#e9ebef;left:42.58px;transform:scaleX(0.9164);transform-origin:0 0;-webkit-text-stroke:0.25px #e9ebef;">Dashboard</span>
<span class="tx" style="top:185px;font-size:15.5px;color:#e9ebef;left:42.59px;transform:scaleX(0.9136);transform-origin:0 0;-webkit-text-stroke:0.25px #e9ebef;">Media</span>
<span class="tx" style="top:226px;font-size:15.5px;color:#e9ebef;left:42.58px;transform:scaleX(0.9205);transform-origin:0 0;-webkit-text-stroke:0.25px #e9ebef;">Blogs</span>
<span class="tx" style="top:267px;font-size:15.5px;color:#e9ebef;left:33.40px;transform:scaleX(0.9254);transform-origin:0 0;-webkit-text-stroke:0.25px #e9ebef;">Write New Blog</span>
<span class="tx" style="top:308px;font-size:15.5px;color:#e9ebef;left:33.40px;transform:scaleX(0.9413);transform-origin:0 0;-webkit-text-stroke:0.25px #e9ebef;">All Blogs</span>
<span class="tx" style="top:349px;font-size:15.5px;color:#e9ebef;left:33.40px;transform:scaleX(0.8909);transform-origin:0 0;-webkit-text-stroke:0.25px #e9ebef;">Categories</span>
<span class="tx" style="top:390px;font-size:15.5px;color:#e9ebef;left:33.40px;transform:scaleX(0.8487);transform-origin:0 0;-webkit-text-stroke:0.25px #e9ebef;">Tags</span>
<span class="tx" style="top:431px;font-size:15.5px;color:#e9ebef;left:33.40px;transform:scaleX(0.8911);transform-origin:0 0;-webkit-text-stroke:0.25px #e9ebef;">Comments</span>
<span class="tx" style="top:472px;font-size:15.5px;color:#e9ebef;left:33.40px;transform:scaleX(0.9243);transform-origin:0 0;-webkit-text-stroke:0.25px #e9ebef;">Settings</span>
<span class="tx" style="top:513px;font-size:15.5px;color:#e9ebef;left:33.40px;transform:scaleX(0.9159);transform-origin:0 0;-webkit-text-stroke:0.25px #e9ebef;">Comment Settings</span>
<span class="tx" style="top:559px;font-size:15.5px;color:#e9ebef;left:42.54px;transform:scaleX(0.8565);transform-origin:0 0;-webkit-text-stroke:0.25px #e9ebef;">Pages</span>
<span class="tx" style="top:600px;font-size:15.5px;color:#e9ebef;left:42.53px;transform:scaleX(0.8728);transform-origin:0 0;-webkit-text-stroke:0.25px #e9ebef;">Messages</span>
<span class="tx" style="top:641px;font-size:15.5px;color:#e9ebef;left:42.49px;transform:scaleX(0.9103);transform-origin:0 0;-webkit-text-stroke:0.25px #e9ebef;">Products</span>
<span class="tx" style="top:682px;font-size:15.5px;color:#e9ebef;left:43.40px;transform:scaleX(0.8820);transform-origin:0 0;-webkit-text-stroke:0.25px #e9ebef;">Orders</span>
<span class="tx" style="top:723px;font-size:15.5px;color:#e9ebef;left:43.40px;transform:scaleX(0.8778);transform-origin:0 0;-webkit-text-stroke:0.25px #e9ebef;">Customers</span>
<span class="tx" style="top:764px;font-size:15.5px;color:#e9ebef;left:43.40px;transform:scaleX(0.9074);transform-origin:0 0;-webkit-text-stroke:0.25px #e9ebef;">Shippings</span>
<span class="tx" style="top:805px;font-size:15.5px;color:#e9ebef;left:42.51px;transform:scaleX(0.8949);transform-origin:0 0;-webkit-text-stroke:0.25px #e9ebef;">Payments</span>
<span class="tx" style="top:846px;font-size:15.5px;color:#e9ebef;left:42.45px;transform:scaleX(0.9483);transform-origin:0 0;-webkit-text-stroke:0.25px #e9ebef;">Marketing</span>
<span class="tx" style="top:887px;font-size:15.5px;color:#e9ebef;left:42.50px;transform:scaleX(0.8968);transform-origin:0 0;-webkit-text-stroke:0.25px #e9ebef;">Reports</span>
<span class="tx" style="top:830px;font-size:11.5px;color:#484848;left:60.60px;transform:scaleX(0.8924);transform-origin:0 0;z-index:7;">LIGHT</span>
<span class="tx" style="top:26px;font-size:14px;color:#fff;font-weight:bold;left:335.30px;transform:scaleX(0.8503);transform-origin:0 0;">Clear Cache</span>
<span class="tx" style="top:26px;font-size:14px;color:#fff;font-weight:bold;left:459.90px;transform:scaleX(0.8867);transform-origin:0 0;">Visit Website</span>
<span class="tx" style="top:11px;font-size:20.5px;color:#222;font-weight:bold;left:1532.90px;width:63.82px;transform:scaleX(1.0413);transform-origin:100% 0;">16 : 35</span>
<span class="tx" style="top:39px;font-size:13.6px;color:#777;left:1457.80px;width:139.04px;transform:scaleX(0.9576);transform-origin:100% 0;">Thu, 4 December 2025</span>
<span class="tx" style="top:17px;font-size:14px;color:#666;font-weight:bold;left:1704.33px;width:105.03px;transform:scaleX(0.8232);transform-origin:100% 0;">Example Admin</span>
<span class="tx" style="top:38px;font-size:11px;color:#777;left:1745.43px;width:63.59px;transform:scaleX(1.0241);transform-origin:100% 0;">Super Admin</span>
<span class="tx" style="top:13px;font-size:11.5px;color:#fff;font-weight:bold;left:1691.60px;transform:scaleX(0.9116);transform-origin:0 0;">19</span>
<span class="tx" style="top:102px;font-size:20.3px;color:#222;font-weight:bold;left:295.40px;transform:scaleX(0.8675);transform-origin:0 0;">All Blogs</span>
<span class="tx" style="top:105px;font-size:14px;color:#fff;font-weight:bold;left:1716.60px;transform:scaleX(0.9032);transform-origin:0 0;">Write New Blog</span>
<span class="tx" style="top:181px;font-size:12px;color:#fff;font-weight:bold;left:319.80px;transform:scaleX(0.9665);transform-origin:0 0;">All(4)</span>
<span class="tx" style="top:181px;font-size:12px;color:#fff;font-weight:bold;left:396.90px;transform:scaleX(0.9523);transform-origin:0 0;">Mine(4)</span>
<span class="tx" style="top:181px;font-size:12px;color:#fff;font-weight:bold;left:485.00px;transform:scaleX(0.9027);transform-origin:0 0;">Published(4)</span>
<span class="tx" style="top:181px;font-size:12px;color:#fff;font-weight:bold;left:598.00px;transform:scaleX(0.9025);transform-origin:0 0;">Scheduled(0)</span>
<span class="tx" style="top:181px;font-size:12px;color:#fff;font-weight:bold;left:713.80px;transform:scaleX(0.9119);transform-origin:0 0;">Drafts(0)</span>
<span class="tx" style="top:181px;font-size:12px;color:#fff;font-weight:bold;left:807.40px;transform:scaleX(0.9032);transform-origin:0 0;">Pending(0)</span>
<span class="tx" style="top:181px;font-size:12px;color:#fff;font-weight:bold;left:912.10px;transform:scaleX(0.9182);transform-origin:0 0;">Featured(4)</span>
<span class="tx" style="top:245px;font-size:15.5px;color:#333;left:315.20px;transform:scaleX(0.8717);transform-origin:0 0;">Show</span>
<span class="tx" style="top:246px;font-size:15.5px;color:#333;left:374.84px;transform:scaleX(0.9627);transform-origin:0 0;">10</span>
<span class="tx" style="top:245px;font-size:15.5px;color:#333;left:440.40px;transform:scaleX(0.9279);transform-origin:0 0;">entries</span>
<span class="tx" style="top:246px;font-size:15.5px;color:#333;left:542.19px;transform:scaleX(1.0064);transform-origin:0 0;">Bulk Action</span>
<span class="tx" style="top:247px;font-size:12px;color:#fff;font-weight:bold;left:721.00px;transform:scaleX(0.8705);transform-origin:0 0;">Apply</span>
<span class="tx" style="top:245px;font-size:15.5px;color:#333;left:1540.80px;transform:scaleX(0.8942);transform-origin:0 0;">Search:</span>
<span class="tx" style="top:317px;font-size:15.3px;color:#333;font-weight:bold;left:398.49px;transform:scaleX(0.9133);transform-origin:0 0;">Image</span>
<span class="tx" style="top:317px;font-size:15.3px;color:#333;font-weight:bold;left:571.28px;transform:scaleX(0.9214);transform-origin:0 0;">Name</span>
<span class="tx" style="top:317px;font-size:15.3px;color:#333;font-weight:bold;left:898.70px;transform:scaleX(0.8670);transform-origin:0 0;">Author</span>
<span class="tx" style="top:317px;font-size:15.3px;color:#333;font-weight:bold;left:1072.40px;transform:scaleX(0.8384);transform-origin:0 0;">Category</span>
<span class="tx" style="top:317px;font-size:15.3px;color:#333;font-weight:bold;left:1203.40px;transform:scaleX(0.9011);transform-origin:0 0;">Featured</span>
<span class="tx" style="top:317px;font-size:15.3px;color:#333;font-weight:bold;left:1357.10px;transform:scaleX(0.8659);transform-origin:0 0;">Comment</span>
<span class="tx" style="top:317px;font-size:15.3px;color:#333;font-weight:bold;left:1494.80px;transform:scaleX(0.8542);transform-origin:0 0;">Status</span>
<span class="tx" style="top:317px;font-size:15.3px;color:#333;font-weight:bold;left:1724.00px;transform:scaleX(0.8329);transform-origin:0 0;">Actions</span>
<span class="tx" style="top:386px;font-size:14.5px;color:#333;font-weight:bold;left:575.20px;transform:scaleX(0.8440);transform-origin:0 0;">Best Halloween Custom You Can Buy</span>
<span class="tx" style="top:385px;font-size:15.8px;color:#4a4f58;left:903.79px;transform:scaleX(0.9096);transform-origin:0 0;">Example Admin</span>
<span class="tx" style="top:386px;font-size:14.5px;color:#333;font-weight:bold;left:1079.90px;transform:scaleX(0.8280);transform-origin:0 0;">Category 1</span>
<span class="tx" style="top:374px;font-size:11px;color:#fff;font-weight:bold;left:1510.90px;transform:scaleX(0.8950);transform-origin:0 0;">Published</span>
<span class="tx" style="top:399px;font-size:14.8px;color:#333;left:1506.20px;">01-11-2025 11:11 AM</span>
<span class="tx" style="top:372px;font-size:12px;color:#fff;font-weight:bold;left:1394.20px;transform:scaleX(0.9143);transform-origin:0 0;">0</span>
<span class="tx" style="top:467px;font-size:14.5px;color:#333;font-weight:bold;left:575.20px;transform:scaleX(0.8640);transform-origin:0 0;">Find The Best Raw Meat Online</span>
<span class="tx" style="top:467px;font-size:15.8px;color:#4a4f58;left:903.79px;transform:scaleX(0.9096);transform-origin:0 0;">Example Admin</span>
<span class="tx" style="top:468px;font-size:14.5px;color:#333;font-weight:bold;left:1079.90px;transform:scaleX(0.8280);transform-origin:0 0;">Category 2</span>
<span class="tx" style="top:456px;font-size:11px;color:#fff;font-weight:bold;left:1510.90px;transform:scaleX(0.8950);transform-origin:0 0;">Published</span>
<span class="tx" style="top:481px;font-size:14.8px;color:#333;left:1506.20px;">01-11-2025 11:11 AM</span>
<span class="tx" style="top:454px;font-size:12px;color:#fff;font-weight:bold;left:1394.20px;transform:scaleX(0.9143);transform-origin:0 0;">0</span>
<span class="tx" style="top:549px;font-size:14.5px;color:#333;font-weight:bold;left:575.20px;transform:scaleX(0.8417);transform-origin:0 0;">Build A PC Step-By-Step Guide</span>
<span class="tx" style="top:548px;font-size:15.8px;color:#4a4f58;left:903.79px;transform:scaleX(0.9096);transform-origin:0 0;">Example Admin</span>
<span class="tx" style="top:549px;font-size:14.5px;color:#333;font-weight:bold;left:1079.90px;transform:scaleX(0.8280);transform-origin:0 0;">Category 1</span>
<span class="tx" style="top:537px;font-size:11px;color:#fff;font-weight:bold;left:1510.90px;transform:scaleX(0.8950);transform-origin:0 0;">Published</span>
<span class="tx" style="top:563px;font-size:14.8px;color:#333;left:1506.20px;">01-11-2025 11:11 AM</span>
<span class="tx" style="top:536px;font-size:12px;color:#fff;font-weight:bold;left:1394.20px;transform:scaleX(0.9143);transform-origin:0 0;">0</span>
<span class="tx" style="top:630px;font-size:14.5px;color:#333;font-weight:bold;left:575.20px;transform:scaleX(0.8503);transform-origin:0 0;">Top Products To Need When Traveling</span>
<span class="tx" style="top:629px;font-size:15.8px;color:#4a4f58;left:903.79px;transform:scaleX(0.9096);transform-origin:0 0;">Example Admin</span>
<span class="tx" style="top:621px;font-size:14.5px;color:#333;font-weight:bold;left:1079.90px;transform:scaleX(0.8280);transform-origin:0 0;">Category 2</span>
<span class="tx" style="top:641px;font-size:14.5px;color:#333;font-weight:bold;left:1079.90px;transform:scaleX(0.8280);transform-origin:0 0;">Category 1</span>
<span class="tx" style="top:619px;font-size:11px;color:#fff;font-weight:bold;left:1510.90px;transform:scaleX(0.8950);transform-origin:0 0;">Published</span>
<span class="tx" style="top:644px;font-size:14.8px;color:#333;left:1506.20px;">01-11-2025 11:11 AM</span>
<span class="tx" style="top:617px;font-size:12px;color:#fff;font-weight:bold;left:1394.20px;transform:scaleX(0.9143);transform-origin:0 0;">0</span>
<span class="tx" style="top:689px;font-size:15.3px;color:#777;left:295.40px;transform:scaleX(0.9521);transform-origin:0 0;">Showing 1 to 4 items of 4</span>
<span class="tx" style="top:693px;font-size:15px;color:#0d55ad;font-weight:bold;left:1653.20px;transform:scaleX(0.9375);transform-origin:0 0;">1</span>
<span class="tx" style="top:862px;font-size:14px;color:#888;left:289.63px;transform:scaleX(0.9719);transform-origin:0 0;">@2025 . All right reserved by</span>
<span class="tx" style="top:862px;font-size:14px;color:#1d5ca6;left:468.70px;transform:scaleX(0.9930);transform-origin:0 0;">Themelooks LTD</span>
<span class="tx" style="top:862px;font-size:14px;color:#777;left:1783.48px;width:81.72px;transform:scaleX(0.9275);transform-origin:100% 0;">Version 1.0.0</span>
</body></html>
